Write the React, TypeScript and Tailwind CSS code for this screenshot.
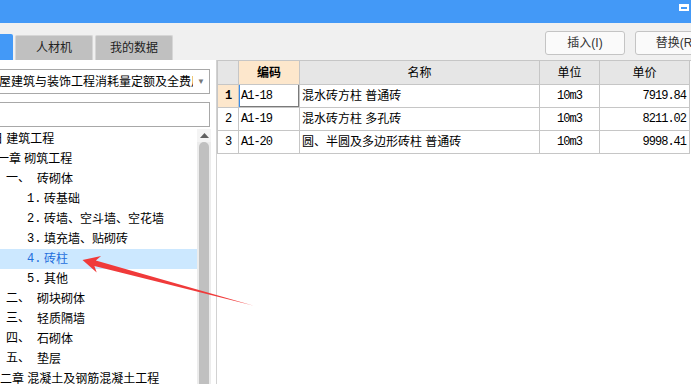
import React from 'react';

const tree: { pre: string; label?: string; text: string; indent: number; labelW?: number; active?: boolean }[] = [
  { pre: '日 ', text: '建筑工程', indent: -9 },
  { pre: '第一章 ', text: '砌筑工程', indent: -15 },
  { pre: '', label: '一、', text: '砖砌体', indent: 6, labelW: 31 },
  { pre: '', label: '1.', text: '砖基础', indent: 27, labelW: 17 },
  { pre: '', label: '2.', text: '砖墙、空斗墙、空花墙', indent: 27, labelW: 17 },
  { pre: '', label: '3.', text: '填充墙、贴砌砖', indent: 27, labelW: 17 },
  { pre: '', label: '4.', text: '砖柱', indent: 27, labelW: 17, active: true },
  { pre: '', label: '5.', text: '其他', indent: 27, labelW: 17 },
  { pre: '', label: '二、', text: '砌块砌体', indent: 6, labelW: 31 },
  { pre: '', label: '三、', text: '轻质隔墙', indent: 6, labelW: 31 },
  { pre: '', label: '四、', text: '石砌体', indent: 6, labelW: 31 },
  { pre: '', label: '五、', text: '垫层', indent: 6, labelW: 31 },
  { pre: '第二章 ', text: '混凝土及钢筋混凝土工程', indent: -12 },
];

const rows = [
  { n: '1', code: 'A1-18', name: '混水砖方柱 普通砖', unit: '10m3', price: '7919.84' },
  { n: '2', code: 'A1-19', name: '混水砖方柱 多孔砖', unit: '10m3', price: '8211.02' },
  { n: '3', code: 'A1-20', name: '圆、半圆及多边形砖柱 普通砖', unit: '10m3', price: '9998.41' },
];

const cell = 'border-r border-b border-[#c6c6c6] flex items-center';
const mono = "font-['Liberation_Mono',monospace] text-[12px] tracking-[-1px]";

export default function App() {
  return (
    <div className="relative w-[691px] h-[384px] overflow-hidden bg-[#f0f0f0] text-[12px] text-black font-['Liberation_Sans','Noto_Sans_CJK_SC',sans-serif]">
      {/* title bar */}
      <div className="h-[23px] bg-[#4399f7] flex justify-end items-start pt-[4px] pr-[2px]">
        <div className="w-[10px] h-[7px] border-2 border-t-[3px] border-white" />
      </div>

      {/* tabs + buttons */}
      <div className="h-[37px] flex">
        <div className="flex items-end gap-[2px]">
          <div className="w-[13px] h-[26px] bg-[#4399f7] rounded-tr-[2px]" />
          <div className="w-[78px] h-[25px] bg-[#c0c0c0] border border-b-0 border-[#d6d6d6] rounded-t-[2px] flex items-center justify-center text-[#222]">
            人材机
          </div>
          <div className="w-[78px] h-[25px] bg-[#c0c0c0] border border-b-0 border-[#d6d6d6] rounded-t-[2px] flex items-center justify-center text-[#222]">
            我的数据
          </div>
        </div>
        <div className="ml-auto flex gap-[10px] pt-[8px] -mr-[26px]">
          <button className="w-[80px] h-[24px] rounded-[3px] border border-[#c4c4c4] bg-[#fafafa] text-[#333] flex items-center justify-center">
            插入(I)
          </button>
          <button className="w-[82px] h-[24px] rounded-[3px] border border-[#c4c4c4] bg-[#fafafa] text-[#333] flex items-center justify-center">
            替换(R)
          </button>
        </div>
      </div>

      {/* main */}
      <div className="flex h-[324px]">
        {/* left panel */}
        <div className="w-[217px] shrink-0 bg-white border-r border-[#d2d2d2] flex flex-col overflow-hidden">
          <div className="pr-[6px] pt-[9px]">
            <div className="-ml-[4px] h-[25px] border border-[#a8a8a8] flex items-center bg-white">
              <span className="flex-1 overflow-hidden whitespace-nowrap pl-[2px]">
                屋建筑与装饰工程消耗量定额及全费用
              </span>
              <span className="w-[16px] text-[8px] text-[#777] text-center shrink-0">▼</span>
            </div>
            <div className="-ml-[4px] mt-[8px] h-[25px] border border-[#a8a8a8] bg-white" />
          </div>
          <div className="flex flex-1 mt-[2px] min-h-0">
            <div className="w-[197px] shrink-0 overflow-hidden">
              {tree.map((t, i) => (
                <div
                  key={i}
                  className={`h-[20px] flex items-center whitespace-nowrap ${t.active ? 'bg-[#cce8ff] text-[#1f6fdc]' : ''}`}
                  style={{ paddingLeft: t.indent > 0 ? t.indent : 0, marginLeft: t.indent < 0 ? t.indent : 0 }}
                >
                  {t.label ? (
                    <>
                      <span className="inline-block font-['Liberation_Mono','Noto_Sans_CJK_SC',monospace] text-[12px]" style={{ width: t.labelW }}>
                        {t.label}
                      </span>
                      <span>{t.text}</span>
                    </>
                  ) : (
                    <span className="whitespace-pre">
                      {t.pre}
                      {t.text}
                    </span>
                  )}
                </div>
              ))}
            </div>
            <div className="w-[14px] shrink-0 bg-[#ececec] flex flex-col items-center">
              <div className="h-[13px] w-full bg-[#f4f4f4] flex items-center justify-center">
                <svg width="9" height="5" viewBox="0 0 9 5">
                  <path d="M0 5 L4.5 0 L9 5 Z" fill="#606060" />
                </svg>
              </div>
              <div className="w-[10px] flex-1 bg-[#c0c0c0] rounded-t-[5px]" />
            </div>
          </div>
        </div>

        {/* right panel */}
        <div className="flex-1 bg-white">
          <div className="border-l border-t border-[#c6c6c6] bg-white">
            <div className="flex h-[24px]">
              <div className={`${cell} w-[21px] bg-[#e6e6e6]`} />
              <div className={`${cell} w-[61px] justify-center bg-[#fde7cc] font-bold`}>编码</div>
              <div className={`${cell} w-[240px] justify-center bg-[#e6e6e6]`}>名称</div>
              <div className={`${cell} w-[60px] justify-center bg-[#e6e6e6]`}>单位</div>
              <div className={`${cell} w-[90px] justify-center bg-[#e6e6e6]`}>单价</div>
            </div>
            {rows.map((r, i) => (
              <div key={r.n} className="flex h-[23px]">
                <div className={`${cell} w-[21px] justify-center ${mono} ${i === 0 ? 'bg-[#fde7cc] font-bold' : ''}`}>
                  {r.n}
                </div>
                <div
                  className={`${cell} w-[61px] pl-[2px] ${mono} ${i === 0 ? 'shadow-[inset_1px_0_0_#3b8de8,inset_-1px_-1px_0_#7a7a7a]' : ''}`}
                >
                  {r.code}
                </div>
                <div className={`${cell} w-[240px] pl-[2px] whitespace-nowrap`}>{r.name}</div>
                <div className={`${cell} w-[60px] justify-center ${mono}`}>{r.unit}</div>
                <div className={`${cell} w-[90px] justify-end pr-[3px] ${mono}`}>{r.price}</div>
              </div>
            ))}
          </div>
        </div>
      </div>

      {/* red annotation arrow */}
      <svg className="absolute inset-0 pointer-events-none" width="691" height="384" viewBox="0 0 691 384">
        <polygon
          points="82.5,260 101.1,256.1 95.8,260.6 253,305.5 94.4,266 96.7,272.5"
          fill="#f03a3a"
        />
      </svg>
    </div>
  );
}
